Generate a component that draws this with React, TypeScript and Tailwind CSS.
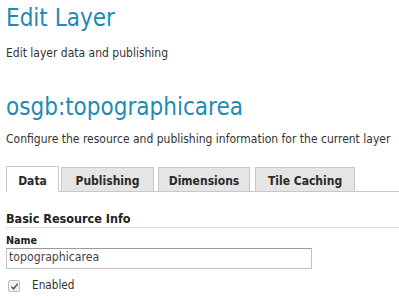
import React from 'react';

const tabs = [
  { label: 'Data', cls: 'w-[53px] mr-[2px]' },
  { label: 'Publishing', cls: 'w-[93px] mr-[4px]' },
  { label: 'Dimensions', cls: 'w-[92px] mr-[5px]' },
  { label: 'Tile Caching', cls: 'w-[100px]' },
];

export default function App() {
  return (
    <div className="w-[399px] h-[296px] overflow-hidden bg-white text-[#333] px-[6px]" style={{ fontFamily: '"DejaVu Sans Condensed", "DejaVu Sans", Tahoma, sans-serif' }}>
      {/* Page header */}
      <h1 className="pt-[3.5px] text-[24px] leading-[28px] text-[#1f8ab5]">Edit Layer</h1>
      <p className="mt-[14.5px] text-[12px] leading-[14px]">Edit layer data and publishing</p>

      {/* Layer header */}
      <h2 className="mt-[33px] text-[24px] leading-[28px] text-[#1f8ab5]">osgb:topographicarea</h2>
      <p className="mt-[11px] text-[12px] leading-[14px]">Configure the resource and publishing information for the current layer</p>

      {/* Tabs */}
      <div className="mt-[19.5px] flex items-end border-b border-[#c8c8c8] -mr-[6px]">
        {tabs.map((t, i) => (
          <div
            key={t.label}
            className={`${t.cls} ${
              i === 0 ? '-mb-px h-[26px] bg-white' : 'h-[24px] bg-[#e5e5e5]'
            } pt-[3px] flex items-center justify-center border border-b-0 border-[#c8c8c8] text-[12px] font-bold text-[#2a2a2a]`}
          >
            {t.label}
          </div>
        ))}
      </div>

      {/* Section */}
      <h3 className="mt-[18.9px] text-[12.5px] leading-[17px] font-bold text-[#222]">Basic Resource Info</h3>
      <div className="h-px bg-[#dbe6bf] -mr-[6px]" />

      <label className="block mt-[6.4px] text-[10.7px] leading-[12px] font-bold text-[#222]">Name</label>
      <div className="mt-[1.5px] w-[306px] h-[21px] border border-[#c4c4c4] border-t-[#9c9c9c] px-[2px] pt-px text-[12.2px] leading-[14px] text-[#444]">
        topographicarea
      </div>

      <div className="mt-[8px] flex items-center text-[11.7px] text-[#333]">
        <span className="ml-[2px] w-[12px] h-[12px] border border-[#bcbcbc] rounded-[2px] bg-[#f2f2f2] flex items-center justify-center">
          <svg viewBox="0 0 10 10" className="w-[9px] h-[9px]">
            <path d="M1.5 5.2 L4 7.6 L8.6 2" fill="none" stroke="#5a5a5a" strokeWidth="1.7" />
          </svg>
        </span>
        <span className="ml-[12px]">Enabled</span>
      </div>
    </div>
  );
}
